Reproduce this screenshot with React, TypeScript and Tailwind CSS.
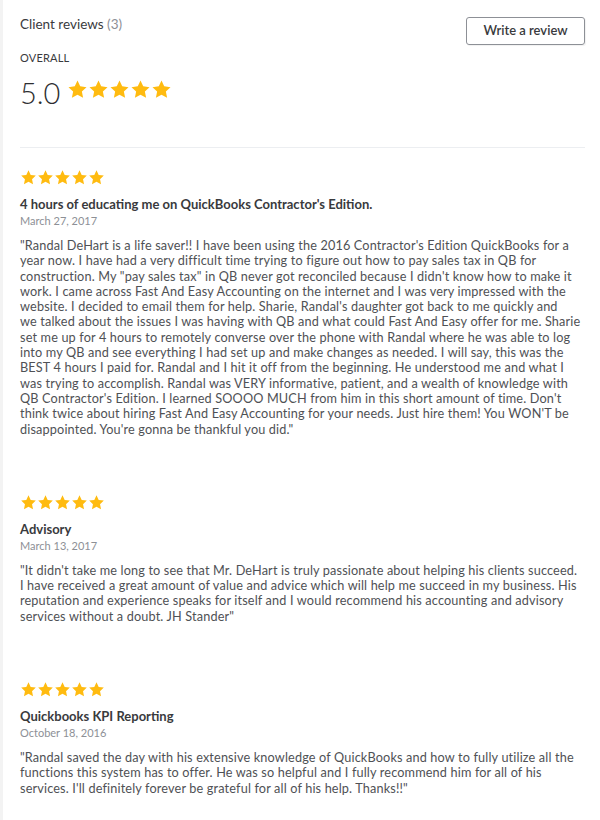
import React from 'react';

// body text kept line by line so the wraps follow the original layout
const reviews = [
  {
    title: "4 hours of educating me on QuickBooks Contractor's Edition.",
    date: 'March 27, 2017',
    lines: [
      "\"Randal DeHart is a life saver!! I have been using the 2016 Contractor's Edition QuickBooks for a",
      'year now. I have had a very difficult time trying to figure out how to pay sales tax in QB for',
      "construction. My \"pay sales tax\" in QB never got reconciled because I didn't know how to make it",
      'work. I came across Fast And Easy Accounting on the internet and I was very impressed with the',
      "website. I decided to email them for help. Sharie, Randal's daughter got back to me quickly and",
      'we talked about the issues I was having with QB and what could Fast And Easy offer for me. Sharie',
      'set me up for 4 hours to remotely converse over the phone with Randal where he was able to log',
      'into my QB and see everything I had set up and make changes as needed. I will say, this was the',
      'BEST 4 hours I paid for. Randal and I hit it off from the beginning. He understood me and what I',
      'was trying to accomplish. Randal was VERY informative, patient, and a wealth of knowledge with',
      "QB Contractor's Edition. I learned SOOOO MUCH from him in this short amount of time. Don't",
      "think twice about hiring Fast And Easy Accounting for your needs. Just hire them! You WON'T be",
      "disappointed. You're gonna be thankful you did.\"",
    ],
  },
  {
    title: 'Advisory',
    date: 'March 13, 2017',
    lines: [
      "\"It didn't take me long to see that Mr. DeHart is truly passionate about helping his clients succeed.",
      'I have received a great amount of value and advice which will help me succeed in my business. His',
      'reputation and experience speaks for itself and I would recommend his accounting and advisory',
      'services without a doubt. JH Stander"',
    ],
  },
  {
    title: 'Quickbooks KPI Reporting',
    date: 'October 18, 2016',
    lines: [
      '"Randal saved the day with his extensive knowledge of QuickBooks and how to fully utilize all the',
      'functions this system has to offer. He was so helpful and I fully recommend him for all of his',
      "services. I'll definitely forever be grateful for all of his help. Thanks!!\"",
    ],
  },
];

const Star = ({ size }: { size: number }) => (
  <svg width={size} height={size} viewBox="0 0 24 24">
    <path
      fill="#ffbb10"
      d="M12 1.8l3.1 6.6 7.2.9-5.3 5 1.4 7.1L12 17.9l-6.4 3.5 1.4-7.1-5.3-5 7.2-.9z"
    />
  </svg>
);

const Stars = ({ size }: { size: number }) => (
  <div className="flex">
    {[0, 1, 2, 3, 4].map((i) => (
      <Star key={i} size={size} />
    ))}
  </div>
);

export default function App() {
  return (
    <div className="w-[600px] h-[820px] bg-white flex font-['Lato',sans-serif] text-[#393a3d] overflow-hidden">
      <div className="w-[3px] bg-[#f3f3f3] shrink-0" />
      <div className="flex-1 pl-[17px] pr-[15px]">
        <div className="flex justify-between items-start pt-[17px]">
          <div>
            <div className="text-[13.5px] leading-[14px]">
              Client reviews <span className="text-[#8d9096]">(3)</span>
            </div>
            <div className="mt-[21px] text-[11px] leading-[12px] tracking-[0.2px]">OVERALL</div>
            <div className="flex items-center mt-[14px]">
              <span className="text-[29px] leading-[30px] font-light text-[#2d2e30]">5.0</span>
              <div className="ml-[7px] -mt-[7px]">
                <Stars size={21} />
              </div>
            </div>
          </div>
          <button className="w-[119px] h-[28px] border border-[#8d9096] rounded-[3px] text-[13px] font-semibold text-[#393a3d] shadow-[1px_1px_1px_rgba(0,0,0,0.06)]">
            Write a review
          </button>
        </div>
        <div className="h-px bg-[#eceef1] mt-[39px]" />
        <div className="pt-[21px]">
          {reviews.map((r, i) => (
            <div key={i} className={i === 0 ? '' : 'mt-[57px]'}>
              <Stars size={17} />
              <div className="mt-[10px] text-[13px] font-bold leading-[16px]">{r.title}</div>
              <div className="mt-[2px] text-[11px] leading-[14px] text-[#8d9096]">{r.date}</div>
              <p className="mt-[10px] text-[12.7px] tracking-[0.15px] leading-[15.3px] text-[#4f5155]">
                {r.lines.map((l, j) => (
                  <span key={j} className="block whitespace-nowrap">
                    {l}
                  </span>
                ))}
              </p>
            </div>
          ))}
        </div>
      </div>
    </div>
  );
}
